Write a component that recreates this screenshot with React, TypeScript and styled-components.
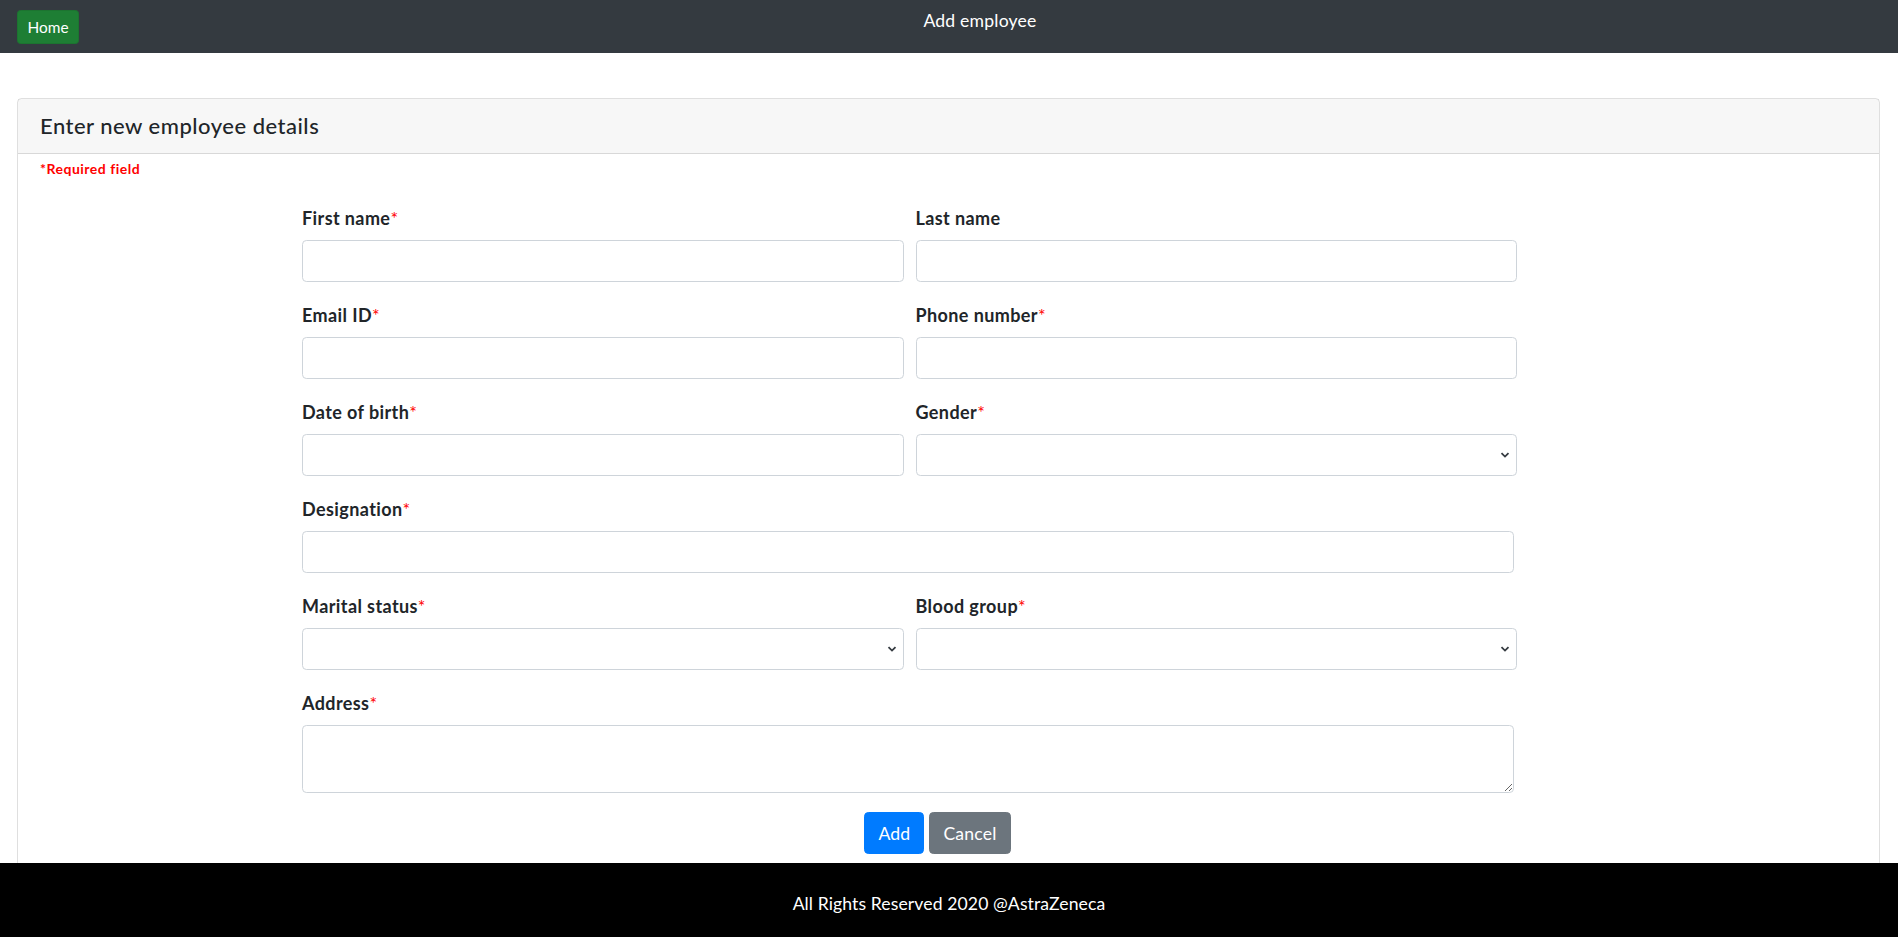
import styled, { createGlobalStyle } from "styled-components";

const GlobalStyle = createGlobalStyle`
  body {
    margin: 0;
    font-family: Lato, "Noto Sans", sans-serif;
    color: #212529;
    background: #fff;
  }
  * {
    box-sizing: border-box;
  }
`;

const NavBar = styled.nav`
  height: 53px;
  background-color: #343a40;
  display: flex;
  align-items: center;
  padding: 0 17px;
`;

const HomeButton = styled.button`
  width: 62px;
  height: 34px;
  background-color: #1e7e34;
  border: 1px solid #1c7430;
  border-radius: 3.5px;
  color: #fff;
  font-family: inherit;
  font-size: 15.4px;
  padding: 0;
`;

const NavTitle = styled.div`
  flex: 1;
  text-align: center;
  color: #fff;
  font-size: 17.6px;
  letter-spacing: 0.2px;
  line-height: 26px;
  margin-bottom: 12px;
`;

const Main = styled.main`
  padding: 45px 18px 0 17px;
`;

const Card = styled.section`
  border: 1px solid rgba(0, 0, 0, 0.125);
  border-radius: 4.4px;
`;

const CardHeader = styled.div`
  padding: 14px 22px;
  background-color: rgba(0, 0, 0, 0.03);
  border-bottom: 1px solid rgba(0, 0, 0, 0.125);
`;

const CardTitle = styled.h5`
  margin: 0;
  font-size: 22px;
  font-weight: 500;
  letter-spacing: 0.5px;
  line-height: 1.2;
`;

const CardBody = styled.div`
  padding: 5px 22px 20px 22px;
`;

const RequiredNote = styled.div`
  color: red;
  font-size: 14px;
  font-weight: bold;
  letter-spacing: 0.5px;
  line-height: 20px;
`;

const Form = styled.form`
  width: 1215px;
  margin: 26px 0 0 262px;
`;

const Row = styled.div`
  display: grid;
  grid-template-columns: 1fr 1fr;
  column-gap: 12px;
`;

const Field = styled.div<{ $full?: boolean }>`
  margin-bottom: 20px;
  width: ${props => (props.$full ? "1212px" : "auto")};
`;

const Label = styled.label`
  display: block;
  font-weight: bold;
  font-size: 18px;
  letter-spacing: 0.4px;
  line-height: 26px;
  margin-bottom: 9px;
`;

const Star = styled.span`
  color: red;
  font-weight: normal;
`;

const Input = styled.input`
  display: block;
  width: 100%;
  height: 42px;
  border: 1px solid #ced4da;
  border-radius: 4.4px;
  background: #fff;
`;

const SelectWrap = styled.div`
  position: relative;
`;

const Select = styled.select`
  display: block;
  width: 100%;
  height: 42px;
  border: 1px solid #ced4da;
  border-radius: 4.4px;
  background: #fff;
  appearance: none;
`;

const Chevron = styled.svg`
  position: absolute;
  right: 7px;
  top: 16px;
  pointer-events: none;
`;

const TextArea = styled.textarea`
  display: block;
  width: 100%;
  height: 68px;
  border: 1px solid #ced4da;
  border-radius: 4.4px;
`;

const ButtonRow = styled.div`
  display: flex;
  justify-content: center;
  gap: 5px;
  padding-left: 56px;
  margin-top: -1px;
`;

const Button = styled.button<{ $variant: "primary" | "secondary" }>`
  height: 42px;
  padding: 0 13px;
  font-family: inherit;
  font-size: 17.6px;
  letter-spacing: 0.2px;
  color: #fff;
  border-radius: 4.4px;
  border: 1px solid ${props => (props.$variant === "primary" ? "#007bff" : "#6c757d")};
  background-color: ${props => (props.$variant === "primary" ? "#007bff" : "#6c757d")};
`;

const Footer = styled.footer`
  position: fixed;
  left: 0;
  right: 0;
  bottom: 0;
  height: 74px;
  padding-top: 6px;
  background: #000;
  color: #fff;
  font-size: 17.6px;
  letter-spacing: 0.1px;
  display: flex;
  justify-content: center;
  align-items: center;
`;

function Req() {
  return <Star>*</Star>;
}

function DropDown() {
  return (
    <SelectWrap>
      <Select defaultValue="">
        <option value=""></option>
      </Select>
      <Chevron width="10" height="10" viewBox="0 0 10 10">
        <path d="M1.5 3.2 5 6.6 8.5 3.2" fill="none" stroke="#343a40" strokeWidth="1.8" />
      </Chevron>
    </SelectWrap>
  );
}

function App() {
  return (
    <>
      <GlobalStyle />
      <NavBar>
        <HomeButton>Home</HomeButton>
        <NavTitle>Add employee</NavTitle>
      </NavBar>
      <Main>
        <Card>
          <CardHeader>
            <CardTitle>Enter new employee details</CardTitle>
          </CardHeader>
          <CardBody>
            <RequiredNote>*Required field</RequiredNote>
            <Form onSubmit={e => e.preventDefault()}>
              <Row>
                <Field>
                  <Label>First name<Req /></Label>
                  <Input type="text" />
                </Field>
                <Field>
                  <Label>Last name</Label>
                  <Input type="text" />
                </Field>
              </Row>
              <Row>
                <Field>
                  <Label>Email ID<Req /></Label>
                  <Input type="email" />
                </Field>
                <Field>
                  <Label>Phone number<Req /></Label>
                  <Input type="text" />
                </Field>
              </Row>
              <Row>
                <Field>
                  <Label>Date of birth<Req /></Label>
                  <Input type="text" />
                </Field>
                <Field>
                  <Label>Gender<Req /></Label>
                  <DropDown />
                </Field>
              </Row>
              <Field $full>
                <Label>Designation<Req /></Label>
                <Input type="text" />
              </Field>
              <Row>
                <Field>
                  <Label>Marital status<Req /></Label>
                  <DropDown />
                </Field>
                <Field>
                  <Label>Blood group<Req /></Label>
                  <DropDown />
                </Field>
              </Row>
              <Field $full>
                <Label>Address<Req /></Label>
                <TextArea />
              </Field>
              <ButtonRow>
                <Button $variant="primary" type="submit">Add</Button>
                <Button $variant="secondary" type="button">Cancel</Button>
              </ButtonRow>
            </Form>
          </CardBody>
        </Card>
      </Main>
      <Footer>All Rights Reserved 2020 @AstraZeneca</Footer>
    </>
  );
}

export default App;
